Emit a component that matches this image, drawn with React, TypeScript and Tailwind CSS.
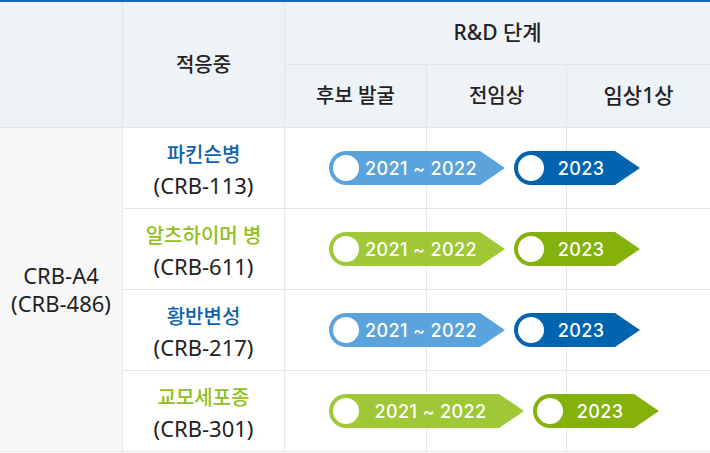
import React from "react";

type Tone = "blue" | "green";

interface Row {
  name: string;
  code: string;
  tone: Tone;
  wide?: boolean;
}

const ROWS: Row[] = [
  { name: "파킨슨병", code: "(CRB-113)", tone: "blue" },
  { name: "알츠하이머 병", code: "(CRB-611)", tone: "green" },
  { name: "황반변성", code: "(CRB-217)", tone: "blue" },
  { name: "교모세포종", code: "(CRB-301)", tone: "green", wide: true },
];

const COLORS = {
  blue: { light: "#5ba3dc", dark: "#0064b0", text: "text-[#0d63b0]" },
  green: { light: "#a0c836", dark: "#84b20b", text: "text-[#8fbf22]" },
};

const font = "font-['Noto_Sans','Noto_Sans_CJK_KR',sans-serif]";

export default function App() {
  return (
    <div className={`w-[710px] h-[453px] bg-white border-t-2 border-[#1768bd] ${font} text-[#222]`}>
      <div className="grid grid-cols-[123px_162px_142px_140px_143px] grid-rows-[63px_63px_81px_81px_81px_81px]">
        {/* header */}
        <div className="row-span-2 bg-[#eff3f8] border-r border-b border-[#e3e6ea]" />
        <div className="row-span-2 bg-[#eff3f8] border-r border-b border-[#e3e6ea] flex items-center justify-center text-[20px] font-medium">
          적응중
        </div>
        <div className="col-span-3 bg-[#eff3f8] border-b border-[#e3e6ea] flex items-center justify-center text-[21px] font-medium">
          R&amp;D 단계
        </div>
        <div className="bg-[#eff3f8] border-r border-b border-[#e3e6ea] flex items-center justify-center text-[20px] font-medium">
          후보 발굴
        </div>
        <div className="bg-[#eff3f8] border-r border-b border-[#e3e6ea] flex items-center justify-center text-[20px] font-medium">
          전임상
        </div>
        <div className="bg-[#eff3f8] border-b border-[#e3e6ea] flex items-center justify-center text-[21px] font-medium">
          임상1상
        </div>

        {/* body */}
        <div className="row-span-4 bg-[#f7f7f7] border-r border-b border-[#e3e6ea] flex flex-col items-center justify-center text-[22px] leading-[28px] pb-[2px]">
          <span>CRB-A4</span>
          <span>(CRB-486)</span>
        </div>
        {ROWS.map((r) => (
          <React.Fragment key={r.code}>
            <div className="border-r border-b border-[#e3e6ea] flex flex-col items-center justify-center pt-[4px]">
              <span className={`text-[20px] leading-[30px] font-medium ${COLORS[r.tone].text}`}>{r.name}</span>
              <span className="text-[22px] leading-[30px]">{r.code}</span>
            </div>
            <div className="col-span-3 relative grid grid-cols-[142px_140px_143px] border-b border-[#e3e6ea]">
              <div className="border-r border-[#e3e6ea]" />
              <div className="border-r border-[#e3e6ea]" />
              <div />
              <div className="absolute inset-0 flex items-center pl-[44px] gap-[9px]">
                <Arrow color={COLORS[r.tone].light} width={r.wide ? 170 : 151} label="2021 ~ 2022" />
                <Arrow color={COLORS[r.tone].dark} width={101} label="2023" />
              </div>
            </div>
          </React.Fragment>
        ))}
      </div>
    </div>
  );
}

function Arrow({ color, width, label }: { color: string; width: number; label: string }) {
  return (
    <div className="flex items-center h-[34px]">
      <div className="h-[34px] rounded-l-full flex items-center pl-[4px]" style={{ width, backgroundColor: color }}>
        <span className="w-[26px] h-[26px] rounded-full bg-white shrink-0" />
        <span className="flex-1 text-center text-white text-[18px] font-medium font-['Inter',sans-serif] tracking-[0.4px] pl-[3px]">
          {label}
        </span>
      </div>
      <svg width="25" height="34" viewBox="0 0 25 34" className="block">
        <polygon points="0,0 25,17 0,34" fill={color} />
      </svg>
    </div>
  );
}
